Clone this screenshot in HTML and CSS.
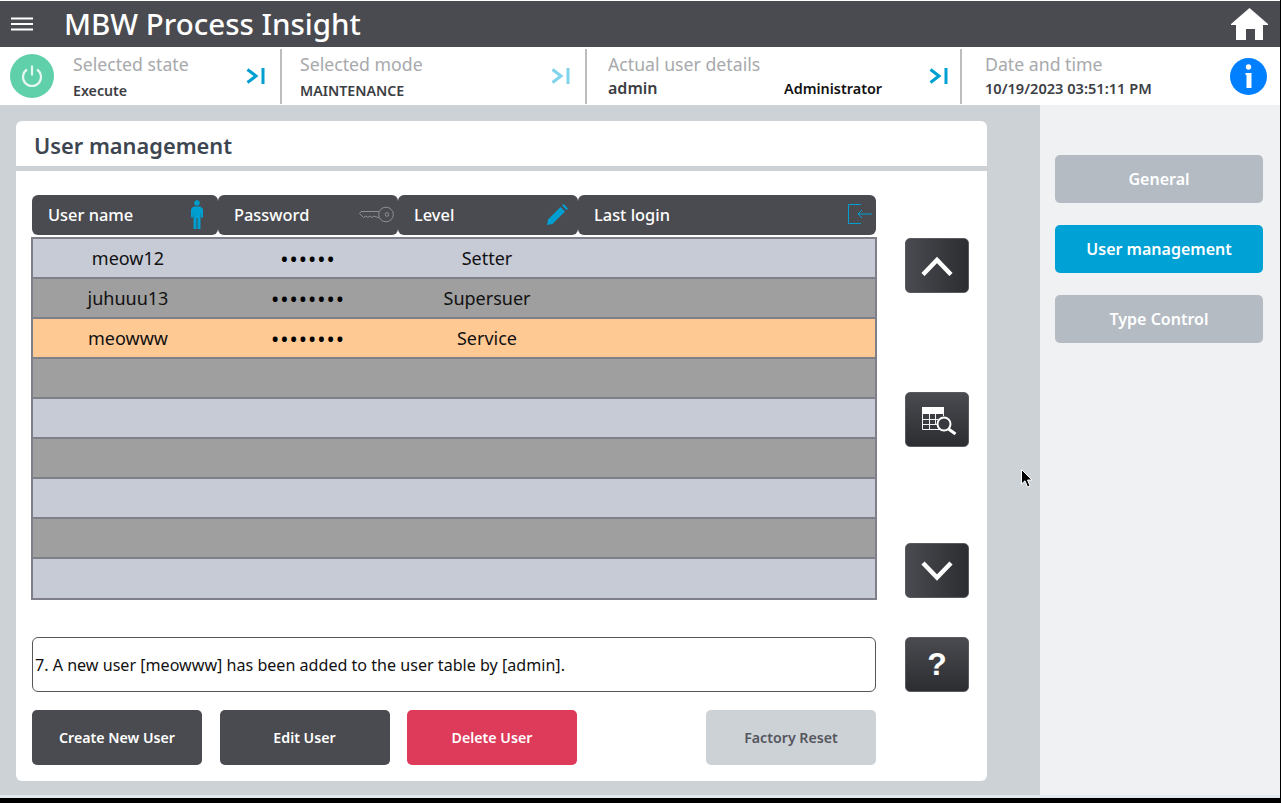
FILE: index.html
```html
<!DOCTYPE html>
<html>
<head>
    <title>MBW Process Insight</title>
    <link rel="stylesheet" href="styles.css">
</head>
<body>
    <div class="screen">
        <header class="topbar">
            <svg class="menu-icon" width="22" height="14" viewBox="0 0 22 14">
                <path d="M0 1.500H22M0 7H22M0 12.500H22" stroke="#fff" stroke-width="2"/>
            </svg>
            <h1 class="app-title">MBW Process Insight</h1>
            <svg class="home-icon" width="37" height="32" viewBox="0 0 37 32">
                <path d="M18.500 0L37 16V17H32V32H24V21H15V32H5V17H0V16Z" fill="#fff"/>
            </svg>
        </header>

        <section class="statusbar">
            <div class="status status-state">
                <div class="power">
                    <svg width="26" height="26" viewBox="0 0 26 26">
                        <path d="M8 6.500A9 9 0 1 0 18 6.500M13 2.500V12.500" fill="none" stroke="#e6f7f1" stroke-width="2.200"/>
                    </svg>
                </div>
                <div class="status-text">
                    <div class="status-label">Selected state</div>
                    <div class="status-value value-low">Execute</div>
                </div>
                <svg class="jump" width="19" height="18" viewBox="0 0 19 18">
                    <path d="M1.500 2.500L10 9L1.500 15.500" fill="none" stroke="#009fd1" stroke-width="3"/>
                    <path d="M17 1V17" stroke="#009fd1" stroke-width="3"/>
                </svg>
            </div>
            <div class="status status-mode">
                <div class="status-text">
                    <div class="status-label">Selected mode</div>
                    <div class="status-value value-low">MAINTENANCE</div>
                </div>
                <svg class="jump" width="19" height="18" viewBox="0 0 19 18">
                    <path d="M1.500 2.500L10 9L1.500 15.500" fill="none" stroke="#7fd3ea" stroke-width="3"/>
                    <path d="M17 1V17" stroke="#7fd3ea" stroke-width="3"/>
                </svg>
            </div>
            <div class="status status-user">
                <div class="status-text">
                    <div class="status-label">Actual user details</div>
                    <div class="user-line">
                        <span class="status-value user-name">admin</span>
                        <span class="status-value user-role">Administrator</span>
                    </div>
                </div>
                <svg class="jump" width="19" height="18" viewBox="0 0 19 18">
                    <path d="M1.500 2.500L10 9L1.500 15.500" fill="none" stroke="#009fd1" stroke-width="3"/>
                    <path d="M17 1V17" stroke="#009fd1" stroke-width="3"/>
                </svg>
            </div>
            <div class="status status-date">
                <div class="status-text">
                    <div class="status-label">Date and time</div>
                    <div class="status-value date-value">10/19/2023 03:51:11 PM</div>
                </div>
                <div class="info">
                    <svg width="37" height="37" viewBox="0 0 37 37">
                        <circle cx="18.500" cy="18.500" r="18.500" fill="#007fff"/>
                        <circle cx="18.500" cy="9" r="2.700" fill="#fff"/>
                        <path d="M15.500 15H21.500V30H16.500V17H15.500Z" fill="#fff"/>
                    </svg>
                </div>
            </div>
        </section>

        <div class="workspace">
            <main class="content">
                <div class="card">
                    <h2 class="card-title">User management</h2>
                    <div class="card-body">
                        <div class="table-area">
                            <div class="table-head">
                                <div class="head-cell cell-user">
                                    User name
                                    <svg class="head-icon" width="14" height="29" viewBox="0 0 14 29">
                                        <circle cx="7" cy="3" r="2.700" fill="#009fd1"/>
                                        <path d="M3.500 6.500H10.500L13 9V17.500H11L10.500 12V29H7.500V18H6.500V29H3.500V12L3 17.500H1V9Z" fill="#009fd1"/>
                                    </svg>
                                </div>
                                <div class="head-cell cell-password">
                                    Password
                                    <svg class="head-icon" width="35" height="17" viewBox="0 0 35 17">
                                        <circle cx="27" cy="8.500" r="7.300" fill="none" stroke="#8f8f93"/>
                                        <circle cx="28" cy="8.500" r="1.800" fill="none" stroke="#8f8f93"/>
                                        <path d="M20 5.500H2L0.500 7.500L4.500 11.500L7 10L9 11.500L11 10L13 11.500L15 10L20.500 12" fill="none" stroke="#8f8f93"/>
                                    </svg>
                                </div>
                                <div class="head-cell cell-level">
                                    Level
                                    <svg class="head-icon" width="21" height="21" viewBox="0 0 21 21">
                                        <path d="M1 15.500L13.500 3L18 7.500L5.500 20L0 21Z" fill="#009fd1"/>
                                        <path d="M15 1.500L16.500 0L21 4.500L19.500 6Z" fill="#009fd1"/>
                                    </svg>
                                </div>
                                <div class="head-cell cell-login">
                                    Last login
                                    <svg class="head-icon" width="24" height="20" viewBox="0 0 24 20">
                                        <path d="M13 0.500H0.500V19.500H13M24 10H10M14 6L10 10L14 14" fill="none" stroke="#009fd1"/>
                                    </svg>
                                </div>
                            </div>
                            <div class="table-rows">
                                <div class="row row-light"><span>meow12</span><span class="dots">••••••</span><span>Setter</span></div>
                                <div class="row row-dark"><span>juhuuu13</span><span class="dots">••••••••</span><span>Supersuer</span></div>
                                <div class="row row-selected"><span>meowww</span><span class="dots">••••••••</span><span>Service</span></div>
                                <div class="row row-dark"></div>
                                <div class="row row-light"></div>
                                <div class="row row-dark"></div>
                                <div class="row row-light"></div>
                                <div class="row row-dark"></div>
                                <div class="row row-light"></div>
                            </div>
                        </div>

                        <div class="scroll-buttons">
                            <button class="square-btn grad-side">
                                <svg width="32" height="20" viewBox="0 0 32 20"><path d="M2 18.500L16 4L30 18.500" fill="none" stroke="#fff" stroke-width="4.500"/></svg>
                            </button>
                            <button class="square-btn grad-down search-btn">
                                <svg class="search-icon" width="35" height="28" viewBox="0 0 35 28">
                                    <rect x="0" y="0" width="22" height="7" fill="#fff"/>
                                    <path d="M0.500 7V22.500H19M0 12.500H16M0 17.500H15M7.500 7V22M13.500 7V17M21.500 7V9" fill="none" stroke="#f2f2f2"/>
                                    <circle cx="22" cy="17" r="6.500" fill="#38393e" stroke="#fff" stroke-width="2"/>
                                    <path d="M26.500 22L33.500 27" stroke="#fff" stroke-width="3"/>
                                </svg>
                            </button>
                            <button class="square-btn grad-side">
                                <svg width="32" height="20" viewBox="0 0 32 20"><path d="M2 2L16 16.500L30 2" fill="none" stroke="#fff" stroke-width="4.500"/></svg>
                            </button>
                        </div>

                        <div class="message">7. A new user [meowww] has been added to the user table by [admin].</div>
                        <button class="square-btn help-btn grad-down">?</button>

                        <div class="actions">
                            <button class="action-btn btn-dark">Create New User</button>
                            <button class="action-btn btn-dark">Edit User</button>
                            <button class="action-btn btn-red">Delete User</button>
                            <button class="action-btn btn-off">Factory Reset</button>
                        </div>
                    </div>
                </div>
            </main>
            <nav class="sidebar">
                <button class="nav-btn">General</button>
                <button class="nav-btn nav-active">User management</button>
                <button class="nav-btn">Type Control</button>
            </nav>
        </div>
        <div class="bottom-strip"></div>
    </div>

    <svg class="cursor" width="12" height="19" viewBox="0 0 12 19">
        <path d="M0.500 0.500V15L4 11.800L6.500 18L9 17L6.500 11H11Z" fill="#000" stroke="#fff"/>
    </svg>
</body>
</html>
```

FILE: styles.css
```css
html, body {
    margin: 0;
    height: 100%;
    background-color: #000;
    overflow: hidden;
}
body {
    font-family: "Noto Sans", "Open Sans", sans-serif;
    color: #111;
}
button {
    font-family: inherit;
    border: 0;
    padding: 0;
    cursor: pointer;
}
.screen {
    width: 1280px;
    height: 798px;
    display: flex;
    flex-direction: column;
    background-color: #fff;
}

/* top bar */
.topbar {
    height: 46px;
    margin-top: 1px;
    padding: 0 12px 0 11px;
    display: flex;
    align-items: center;
    background-color: #4a4b50;
    color: #fff;
    flex-shrink: 0;
}
.menu-icon {
    margin-right: 31px;
}
.app-title {
    margin: 0;
    flex: 1;
    font-size: 29.500px;
    font-weight: 500;
    line-height: 46px;
}

/* status bar */
.statusbar {
    height: 58px;
    display: grid;
    grid-template-columns: 280px 305px 375px 1fr;
    align-items: end;
    flex-shrink: 0;
}
.status {
    height: 55px;
    margin-bottom: 1px;
    display: flex;
    align-items: center;
    box-sizing: border-box;
    border-left: 2px solid #bdbdbd;
    padding-right: 15px;
}
.status-state {
    border-left: 0;
    padding-left: 10px;
}
.status-mode {
    padding-left: 18px;
}
.status-user {
    padding-left: 21px;
    padding-right: 12px;
}
.status-date {
    padding-left: 23px;
    padding-right: 13px;
}
.status-text {
    flex: 1;
    min-width: 0;
    align-self: flex-start;
    padding-top: 4px;
}
.status-label {
    font-size: 17.700px;
    line-height: 23px;
    color: #a7a9ac;
}
.status-value {
    font-size: 14.200px;
    font-weight: 600;
    line-height: 20px;
    color: #3c3e44;
}
.value-low {
    margin-top: 5px;
}
.jump {
    margin-bottom: 2px;
}
.power {
    width: 44px;
    height: 44px;
    margin-right: 19px;
    margin-bottom: 1px;
    border-radius: 50%;
    background-color: #5fd0a9;
    display: flex;
    align-items: center;
    justify-content: center;
}
.user-line {
    margin-top: 2px;
    display: flex;
}
.user-name {
    width: 176px;
    font-size: 16px;
    line-height: 21px;
}
.user-role {
    color: #111;
    font-size: 14.400px;
    line-height: 21px;
}
.date-value {
    margin-top: 2px;
    font-size: 14.600px;
}
.info {
    height: 37px;
    margin-bottom: 1px;
}

/* main area */
.workspace {
    flex: 1;
    display: flex;
    min-height: 0;
}
.content {
    width: 1040px;
    box-sizing: border-box;
    padding: 16px 53px 14px 16px;
    background-color: #cdd2d6;
}
.card {
    height: 100%;
    background-color: #fff;
    border-radius: 6px;
    display: flex;
    flex-direction: column;
}
.card-title {
    margin: 0;
    height: 45px;
    padding-left: 18px;
    border-bottom: 5px solid #cdd2d6;
    font-size: 21.800px;
    font-weight: 600;
    line-height: 49px;
    color: #3d4650;
    flex-shrink: 0;
}
.card-body {
    padding: 24px 18px 16px 16px;
    display: grid;
    grid-template-columns: 844px 64px;
    grid-template-rows: auto 55px 55px;
    column-gap: 29px;
}

/* user table */
.table-area {
    margin-bottom: 37px;
}
.table-head {
    display: grid;
    grid-template-columns: 186px 180px 180px 298px;
    height: 40px;
    margin-bottom: 2px;
}
.head-cell {
    background-color: #4a4b50;
    border-radius: 6px;
    color: #fff;
    font-size: 16.400px;
    font-weight: 500;
    padding: 0 4px 2px 16px;
    box-sizing: border-box;
    display: flex;
    align-items: center;
    justify-content: space-between;
}
.cell-user {
    padding-right: 14px;
}
.cell-level {
    padding-right: 10px;
}
.table-rows {
    width: 846px;
    margin-left: -1px;
    box-sizing: border-box;
    border: 2px solid #7f7f8a;
    background-color: #7f7f8a;
    display: flex;
    flex-direction: column;
    gap: 2px;
}
.row {
    height: 38px;
    display: grid;
    grid-template-columns: 190px 170px 188px;
    align-items: center;
    text-align: center;
    font-size: 18px;
}
.row:last-child {
    height: 39px;
}
.row-light {
    background-color: #c7cbd6;
}
.row-dark {
    background-color: #9f9f9f;
}
.row-selected {
    background-color: #ffc994;
}
.dots {
    font-size: 22px;
    line-height: 30px;
    color: #000;
    letter-spacing: 1px;
}

/* right hand buttons */
.scroll-buttons {
    padding-top: 43px;
    height: 360px;
    display: flex;
    flex-direction: column;
    justify-content: space-between;
}
.square-btn {
    width: 64px;
    height: 55px;
    border-radius: 5px;
    border: 1px solid #5a5b60;
    box-sizing: border-box;
    display: flex;
    align-items: center;
    justify-content: center;
    color: #fff;
}
.grad-side {
    background: linear-gradient(90deg, #4a4b50, #2c2d31);
}
.grad-down {
    background: linear-gradient(180deg, #4a4b50, #2c2d31);
}
.search-btn {
    margin-top: 2px;
}
.search-icon {
    margin: 3px 0 0 5px;
}
.help-btn {
    font-size: 32px;
    font-weight: 700;
    font-family: "Liberation Sans", sans-serif;
}

/* message and actions */
.message {
    height: 55px;
    box-sizing: border-box;
    border: 1px solid #55565a;
    border-radius: 6px;
    padding-left: 2px;
    display: flex;
    align-items: center;
    font-size: 16.100px;
}
.actions {
    grid-column: 1;
    padding-top: 18px;
    display: flex;
    gap: 17.500px;
}
.action-btn {
    width: 170px;
    height: 55px;
    border-radius: 5px;
    font-size: 14.200px;
    font-weight: 600;
    color: #fff;
}
.btn-dark {
    background-color: #4a4b50;
}
.btn-red {
    background-color: #de3a5a;
}
.btn-off {
    margin-left: auto;
    background-color: #cdd2d6;
    color: #55565e;
}

/* side navigation */
.sidebar {
    flex: 1;
    background-color: #f0f1f3;
    padding: 50px 17px 0 15px;
    display: flex;
    flex-direction: column;
    gap: 22px;
}
.nav-btn {
    height: 48px;
    border-radius: 5px;
    background-color: #b4bbc3;
    color: #fff;
    font-size: 16px;
    font-weight: 600;
}
.nav-active {
    background-color: #00a2d6;
}
.bottom-strip {
    height: 3px;
    background-color: #e4e9ee;
    flex-shrink: 0;
}
.cursor {
    position: absolute;
    left: 1021px;
    top: 469px;
}
```
